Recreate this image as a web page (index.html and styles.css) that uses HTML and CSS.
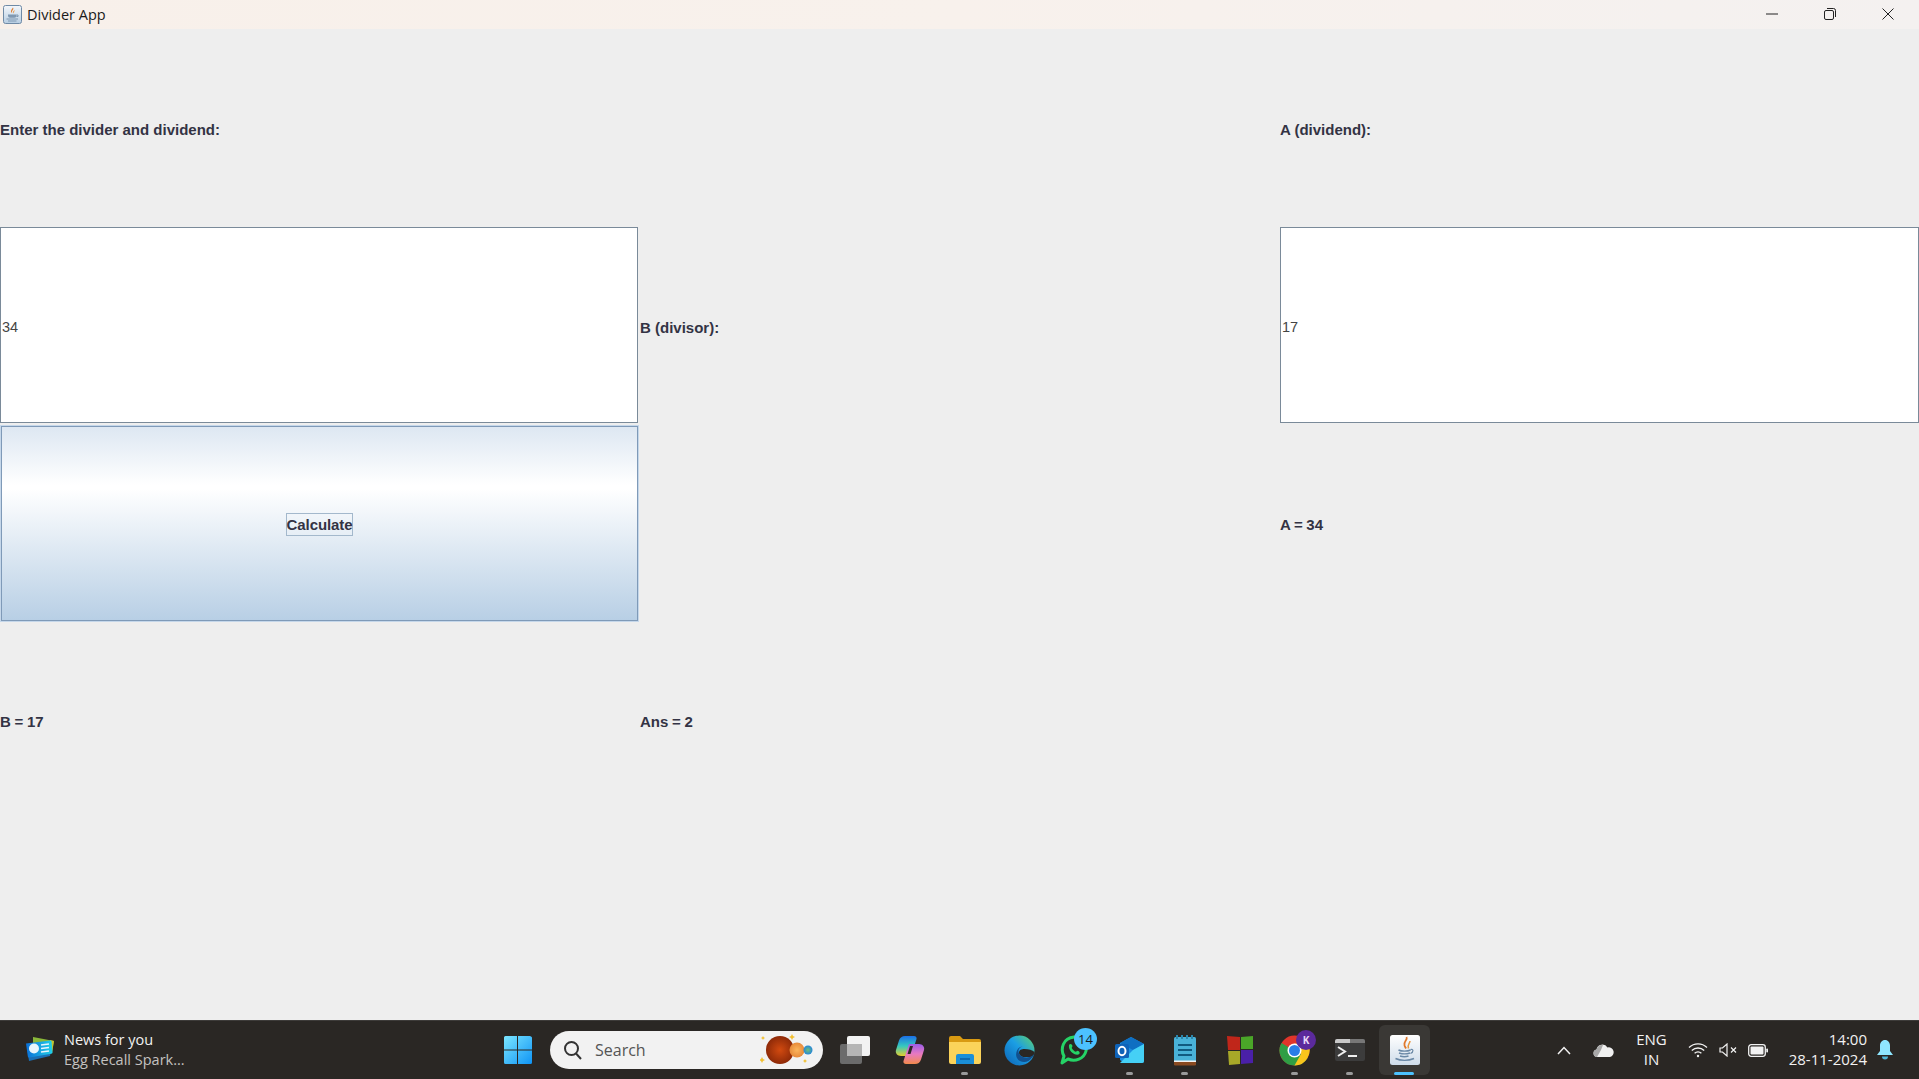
FILE: index.html
```html
<!DOCTYPE html>
<html lang="en">
<head>
<meta charset="UTF-8">
<title>Divider App</title>
<link rel="stylesheet" href="styles.css">
</head>
<body>

<header class="titlebar">
  <div class="app-title">
    <svg class="app-icon" width="21" height="21" viewBox="0 0 21 21">
      <defs>
        <linearGradient id="appbg" x1="0" y1="0" x2="0" y2="1">
          <stop offset="0" stop-color="#f4f7fb"/>
          <stop offset="1" stop-color="#b7cde2"/>
        </linearGradient>
      </defs>
      <rect x="1.500" y="1.500" width="18" height="18" rx="2" fill="url(#appbg)" stroke="#6f8aa6"/>
      <path d="M11 3.500c1.500 2-2 3-.8 5.500-2.400-1.500-.6-3.500.8-5.500z" fill="#e07a2c"/>
      <path d="M12.800 6c.2 1.500-1.800 2-1 3.500-1.800-1-.4-2.500 1-3.500z" fill="#e8963e"/>
      <path d="M6 10.500h8.500v1.200c0 1.300-1 2-2 2h-4.500c-1 0-2-.7-2-2z" fill="#7f98b2"/>
      <path d="M14.500 11h1.500v1.500h-1.500" fill="none" stroke="#7f98b2"/>
      <path d="M4.500 15h11.500M6 17h8.500" stroke="#7f98b2" stroke-width="1.100"/>
    </svg>
    <span>Divider App</span>
  </div>
  <div class="window-controls">
    <svg width="12" height="12" viewBox="0 0 12 12"><path d="M0 6h12" stroke="#222" stroke-width="1"/></svg>
    <svg width="12" height="12" viewBox="0 0 12 12" fill="none" stroke="#222"><rect x=".5" y="2.500" width="9" height="9" rx="1.500"/><path d="M3 .5h6.500a2 2 0 0 1 2 2V9"/></svg>
    <svg width="12" height="12" viewBox="0 0 12 12"><path d="M.5.5l11 11M11.500.5l-11 11" stroke="#222" stroke-width="1"/></svg>
  </div>
</header>

<main class="form-grid">
  <label class="cell">Enter the divider and dividend:</label>
  <div class="cell"></div>
  <label class="cell">A (dividend):</label>

  <div class="field">34</div>
  <label class="cell">B (divisor):</label>
  <div class="field">17</div>

  <div class="calc-button"><span class="calc-focus">Calculate</span></div>
  <div class="cell"></div>
  <div class="cell result">A = 34</div>

  <div class="cell result last-row">B = 17</div>
  <div class="cell result last-row">Ans = 2</div>
  <div class="cell"></div>
</main>

<footer class="taskbar">
  <div class="news">
    <svg width="32" height="32" viewBox="0 0 32 32">
      <defs>
        <linearGradient id="newsbg" x1="0" y1="0" x2="1" y2="0">
          <stop offset="0" stop-color="#0a6fd8"/>
          <stop offset="1" stop-color="#22d0e8"/>
        </linearGradient>
      </defs>
      <path d="M9 3l21 4-2 12-19-4z" fill="#8ab83a"/>
      <path d="M26 6l4 1-2 11-3-1z" fill="#c3c230"/>
      <path d="M3 13l24 4-1 5-21 5z" fill="#1a6fb5"/>
      <path d="M2 9.500l24-3c1-.1 1.500.5 1.600 1.300l.9 10.500c.1.800-.4 1.400-1.200 1.500l-22 3.700c-.8.100-1.400-.4-1.500-1.200z" fill="url(#newsbg)"/>
      <circle cx="10" cy="14.500" r="5" fill="#e8f6fc"/>
      <path d="M17 11l8-1M17 14.500l8-1M17 18l8-1" stroke="#e8f6fc" stroke-width="1.600"/>
    </svg>
    <div class="news-text">
      <div>News for you</div>
      <div class="news-sub">Egg Recall Spark...</div>
    </div>
  </div>

  <div class="task-center">
    <svg class="start" width="30" height="30" viewBox="0 0 30 30">
      <defs>
        <linearGradient id="win" x1="0" y1="0" x2="1" y2="1">
          <stop offset="0" stop-color="#7be6ff"/>
          <stop offset="1" stop-color="#0f94f5"/>
        </linearGradient>
      </defs>
      <path d="M1 2.500a1.500 1.500 0 0 1 1.500-1.500H14v13.500H1zM15 1h11.500A2.500 2.500 0 0 1 29 2.500V14.500H15zM1 15.500h13V29H2.500A1.500 1.500 0 0 1 1 27.500zM15 15.500h14V27.500a1.500 1.500 0 0 1-1.500 1.500H15z" fill="url(#win)"/>
    </svg>

    <div class="search">
      <svg width="20" height="21" viewBox="0 0 20 21" fill="none" stroke="#333" stroke-width="2"><circle cx="8.500" cy="8.500" r="6.500"/><path d="M13 13.500l5 5.500"/></svg>
      <span class="search-text">Search</span>
      <svg class="search-art" width="56" height="34" viewBox="0 0 56 34">
        <defs>
          <radialGradient id="mars"><stop offset="0" stop-color="#d24a10"/><stop offset="1" stop-color="#8e2a08"/></radialGradient>
          <radialGradient id="sun"><stop offset="0" stop-color="#fbb45c"/><stop offset="1" stop-color="#e88a3a"/></radialGradient>
          <radialGradient id="earth"><stop offset="0" stop-color="#6ec07a"/><stop offset="1" stop-color="#2486d8"/></radialGradient>
        </defs>
        <circle cx="20" cy="17" r="14" fill="url(#mars)"/>
        <circle cx="37" cy="17" r="7.500" fill="url(#sun)"/>
        <circle cx="48" cy="17" r="4.500" fill="url(#earth)"/>
        <path d="M2 24l1 2 2 1-2 1-1 2-1-2-2-1 2-1zM32 1l1 2 2 1-2 1-1 2-1-2-2-1 2-1zM3 3l.7 1.300 1.300.7-1.300.7L3 7l-.7-1.300L1 5l1.300-.7zM45 26l.7 1.300 1.300.7-1.300.7-.7 1.300-.7-1.300-1.300-.7 1.300-.7z" fill="#f2c030"/>
      </svg>
    </div>

    <div class="task-icon">
      <svg width="32" height="30" viewBox="0 0 32 30">
        <rect x="1" y="9" width="22" height="20" rx="2" fill="#6b6b6b"/>
        <rect x="8" y="1" width="23" height="20" rx="2" fill="#f2f2f2"/>
        <rect x="8" y="9" width="15" height="12" fill="#b5b5b5"/>
      </svg>
    </div>

    <div class="task-icon">
      <svg width="30" height="30" viewBox="0 0 30 30">
        <defs>
          <linearGradient id="cop1" x1="0" y1="0" x2="0" y2="1"><stop offset="0" stop-color="#1b6fe8"/><stop offset=".5" stop-color="#35c8c0"/><stop offset="1" stop-color="#e4d02e"/></linearGradient>
          <linearGradient id="cop2" x1="0" y1="0" x2="0" y2="1"><stop offset="0" stop-color="#9a5ce8"/><stop offset=".5" stop-color="#e87ac0"/><stop offset="1" stop-color="#f28a4c"/></linearGradient>
        </defs>
        <path d="M10 1h9c2 0 3 1.500 2.500 3L16 21H6c-3.500 0-6-3-5-6l3-9.500C5 2.500 7 1 10 1z" fill="url(#cop1)"/>
        <path d="M20 29h-9c-2 0-3-1.500-2.500-3L14 9h10c3.500 0 6 3 5 6l-3 9.500c-1 3-3 4.500-6 4.500z" fill="url(#cop2)"/>
        <path d="M15 11h3l-2.500 8h-3z" fill="#2a2724"/>
      </svg>
    </div>

    <div class="task-icon running">
      <svg width="34" height="30" viewBox="0 0 34 30">
        <path d="M1 3a2 2 0 0 1 2-2h9l3 3h16a2 2 0 0 1 2 2v3H1z" fill="#d99a12"/>
        <path d="M1 7h32v20a2 2 0 0 1-2 2H3a2 2 0 0 1-2-2z" fill="#fbd35a"/>
        <path d="M8 21a2 2 0 0 1 2-2h14a2 2 0 0 1 2 2v8H8z" fill="#1b8fd8"/>
        <path d="M12 23h10v2H12z" fill="#0f6ab0"/>
      </svg>
    </div>

    <div class="task-icon">
      <svg width="31" height="31" viewBox="0 0 31 31">
        <defs>
          <linearGradient id="edge1" x1="0" y1="1" x2="1" y2="0"><stop offset="0" stop-color="#0c62b4"/><stop offset=".55" stop-color="#1b9ee4"/><stop offset="1" stop-color="#62d46a"/></linearGradient>
        </defs>
        <circle cx="15.500" cy="15.500" r="15" fill="url(#edge1)"/>
        <path d="M30.500 17c0 3-2 5-5 5h-5c-3 0-5.500-2-5.500-4.500s2.500-3.500 5.500-3.500c4 0 8 1 10 3z" fill="#2a2724"/>
        <path d="M30.500 19c-1 2-2 3-2.500 3.800C25 27 20 28 16 26c-3.500-1.800-5-6-3-10.500 1-2.400 3.500-4 6-4-5 1-5 5-4 7 1.500 3 5 4.500 9 3.800 2-.3 4-1 6.500-3.300z" fill="#11508f"/>
      </svg>
    </div>

    <div class="task-icon">
      <svg width="31" height="32" viewBox="0 0 31 32" fill="none">
        <path d="M3 29l2-7C1 15 4 4 15 3c9-.5 14 7 12 14-2 8-11 11-18 8z" stroke="#25d366" stroke-width="3" stroke-linejoin="round"/>
        <path d="M10 11c1-2 3-1 3.500 1l-.8 2c1 2 2.500 3 4 3.800l1.800-1c2 .6 3 2 1.500 3.500-3.500 2-11-3-10-9.300z" fill="#25d366"/>
      </svg>
      <span class="badge-count">14</span>
    </div>

    <div class="task-icon running">
      <svg width="31" height="28" viewBox="0 0 31 28">
        <path d="M6 7l11-6 13 7v17a2 2 0 0 1-2 2H10l-4-3z" fill="#1a8fe0"/>
        <path d="M6 7l11-6 13 7-11 6z" fill="#0f6fc2"/>
        <path d="M30 8v17a2 2 0 0 1-2 2H6l13-13z" fill="#45d0f5"/>
        <rect x="1" y="8" width="14" height="14" rx="1.500" fill="#0f63b8"/>
        <ellipse cx="8" cy="15" rx="3.500" ry="4.200" fill="none" stroke="#fff" stroke-width="2"/>
      </svg>
    </div>

    <div class="task-icon running">
      <svg width="24" height="31" viewBox="0 0 24 31">
        <rect x="1" y="2" width="22" height="28" rx="1.500" fill="#49b2d8"/>
        <path d="M1 27h22v2.500a1 1 0 0 1-1 1H2a1 1 0 0 1-1-1z" fill="#8a4a20"/>
        <path d="M1 25.500h22v1.500H1z" fill="#f2f2f2"/>
        <path d="M5 10h14M5 15h14M5 20h14" stroke="#115a80" stroke-width="2"/>
        <path d="M4 0v4M9 0v4M14 0v4M19 0v4" stroke="#2a86ac" stroke-width="2"/>
      </svg>
    </div>

    <div class="task-icon">
      <svg width="28" height="30" viewBox="0 0 28 30">
        <path d="M1 1l13 1v13H2z" fill="#c0261a"/>
        <path d="M15 2l12-1v13H15z" fill="#4aa628"/>
        <path d="M2 16h12v13l-11 1z" fill="#a8a828"/>
        <path d="M15 15h12v13l-12 1z" fill="#4a20a8"/>
      </svg>
    </div>

    <div class="task-icon running">
      <svg width="31" height="31" viewBox="0 0 31 31">
        <circle cx="15.500" cy="15.500" r="15" fill="#e0352b"/>
        <path d="M15.500 15.500L28.500 23a15 15 0 0 1-13 7.500 15 15 0 0 1-13-7.500z" fill="#2f9e44"/>
        <path d="M15.500 8.500H29a15 15 0 0 1-.5 14.500 15 15 0 0 1-13 7.500L22 19z" fill="#f8c41c"/>
        <path d="M2.500 8a15 15 0 0 0 0 15l7 -2L15 15.500z" fill="#2f9e44"/>
        <circle cx="15.500" cy="15.500" r="7" fill="#fff"/>
        <circle cx="15.500" cy="15.500" r="5.500" fill="#2a7de8"/>
      </svg>
      <span class="badge-profile">K</span>
    </div>

    <div class="task-icon running">
      <svg width="30" height="23" viewBox="0 0 30 23">
        <rect width="30" height="22" rx="2" fill="#3c3c3c"/>
        <path d="M0 2a2 2 0 0 1 2-2h13v4H0z" fill="#c8c8c8"/>
        <path d="M15 0h13a2 2 0 0 1 2 2v2H15z" fill="#777"/>
        <path d="M3 8l7 4.500-7 4.500" fill="none" stroke="#f0f0f0" stroke-width="2"/>
        <path d="M13 17h9" stroke="#f0f0f0" stroke-width="2"/>
      </svg>
    </div>

    <div class="task-icon active">
      <svg width="30" height="30" viewBox="0 0 30 30">
        <defs>
          <linearGradient id="javabg" x1="0" y1="0" x2="0" y2="1"><stop offset="0" stop-color="#fff"/><stop offset="1" stop-color="#cfdcea"/></linearGradient>
        </defs>
        <rect width="30" height="30" rx="2.500" fill="url(#javabg)"/>
        <g fill="none">
          <path d="M16.500 2c1.500 3-3.500 4.500-2 8.500.4 1 1 2 1.500 3" stroke="#e0782c" stroke-width="1.800"/>
          <path d="M20 6c0 2.500-3 3.500-1.500 7.500" stroke="#e8963e" stroke-width="1.500"/>
          <path d="M8.500 15c3 1.500 9 1.500 12 0M9 18c3 1 8 1 11 0M10 21c2.500.8 6 .8 8.500 0" stroke="#6a88a6" stroke-width="1.400"/>
          <path d="M20.500 14.500c3-1 3.500 2.500 0 4" stroke="#6a88a6" stroke-width="1.200"/>
          <path d="M5.500 23.500c5 2.500 13 2.500 18.500 0" stroke="#6a88a6" stroke-width="1.400"/>
        </g>
      </svg>
    </div>
  </div>

  <div class="tray">
    <svg width="14" height="9" viewBox="0 0 14 9" fill="none" stroke="#f2f2f2" stroke-width="1.500"><path d="M1 8l6-6.500L13 8"/></svg>
    <svg class="tray-cloud" width="21" height="14" viewBox="0 0 21 14"><path d="M4 14a3.800 3.800 0 0 1-.5-7.500A6 6 0 0 1 14.500 4.500 4.700 4.700 0 0 1 17 14z" fill="#f0f0f0"/><path d="M4 14a3.800 3.800 0 0 1-.5-7.500A6 6 0 0 1 10 2L8 7z" fill="#a8a8a8"/></svg>
    <div class="tray-lang"><div>ENG</div><div>IN</div></div>
    <div class="tray-status">
      <svg width="20" height="16" viewBox="0 0 20 16" fill="none" stroke="#f2f2f2" stroke-width="1.300"><path d="M1 5.500a13 13 0 0 1 18 0M3.800 8.500a9 9 0 0 1 12.400 0M6.600 11.300a5 5 0 0 1 6.800 0"/><circle cx="10" cy="14" r="1.200" fill="#f2f2f2" stroke="none"/></svg>
      <svg class="tray-mute" width="19" height="14" viewBox="0 0 19 14" fill="none" stroke="#f2f2f2" stroke-width="1.200"><path d="M1 5v4h2.500L8 13V1L3.500 5z"/><path d="M12 4.500l5 5M17 4.500l-5 5"/></svg>
      <svg width="20" height="13" viewBox="0 0 20 13" fill="none"><rect x=".7" y=".7" width="16.600" height="11.600" rx="2.500" stroke="#f2f2f2" stroke-width="1.300"/><rect x="2.500" y="2.500" width="13" height="8" rx="1" fill="#f2f2f2"/><rect x="18.300" y="4.500" width="1.700" height="4" rx=".8" fill="#f2f2f2"/></svg>
    </div>
    <div class="tray-clock"><div>14:00</div><div>28-11-2024</div></div>
    <svg width="16" height="20" viewBox="0 0 16 20"><path d="M8 0c3 0 5 2.500 5 5.500V11l3 4H0l3-4V5.500C3 2.500 5 0 8 0z" fill="#8fe6ff"/><path d="M5 16.500h6a3 3 0 0 1-6 0z" fill="#4fb6d8"/></svg>
  </div>
</footer>

</body>
</html>
```

FILE: styles.css
```css
* {
  box-sizing: border-box;
}

body {
  margin: 0;
  height: 100vh;
  overflow: hidden;
  display: flex;
  flex-direction: column;
  background-color: #eeeeee;
  font-family: "Liberation Sans", Arial, sans-serif;
}

.titlebar {
  height: 29px;
  flex: none;
  display: flex;
  justify-content: space-between;
  align-items: center;
  background: linear-gradient(to right, #f8f0ea, #f8f1ec 50%, #f4f1f0);
}

.app-title {
  display: flex;
  align-items: center;
  gap: 4px;
  padding-left: 2px;
  font-family: "Open Sans", sans-serif;
  font-size: 14.5px;
  color: #1a1a1a;
}

.window-controls {
  display: flex;
  gap: 46px;
  padding: 0 25px 2px 0;
}

.form-grid {
  flex: 1;
  display: grid;
  grid-template-columns: 638px 638px 639px;
  grid-template-rows: repeat(4, 196px);
  gap: 2px;
  align-content: start;
  font-size: 15px;
  font-weight: bold;
  color: #333344;
}

.cell {
  display: flex;
  align-items: center;
  padding-top: 4px;
}

.result {
  padding-top: 2px;
  word-spacing: -.5px;
}

.last-row {
  padding-top: 0;
}

.field {
  display: flex;
  align-items: center;
  padding: 4px 0 0 1px;
  background-color: #fff;
  border: 1px solid #7a8a99;
  font-size: 14.5px;
  font-weight: normal;
  color: #444;
}

.calc-button {
  display: flex;
  justify-content: center;
  align-items: center;
  margin: 1px 0 0 1px;
  padding-top: 1px;
  background: linear-gradient(to bottom, #dde7f2, #ffffff 30%, #ffffff 32%, #b8cfe5);
  border: 1px solid #7f9ab8;
  box-shadow: 0 0 0 1px #c5d7ea;
}

.calc-focus {
  padding: 2px 0;
  border: 1px solid #a3b8cc;
  letter-spacing: -.1px;
}

.taskbar {
  height: 59px;
  flex: none;
  display: flex;
  align-items: center;
  background-color: #2a2724;
  border-top: 1px solid #3d3b39;
  font-family: "Open Sans", sans-serif;
  color: #f2f2f2;
}

.news {
  width: 490px;
  flex: none;
  display: flex;
  align-items: center;
  gap: 8px;
  padding-left: 24px;
  font-size: 14.5px;
  line-height: 20px;
}

.news-sub {
  color: #c4c2c0;
}

.task-center {
  display: flex;
  align-items: center;
}

.start {
  margin: 0 17px 0 13px;
}

.search {
  width: 273px;
  height: 38px;
  margin-right: 4px;
  display: flex;
  align-items: center;
  gap: 12px;
  position: relative;
  padding-left: 13px;
  background-color: #f2f2f2;
  border-radius: 19px;
  color: #555;
  font-size: 16px;
}

.search-art {
  position: absolute;
  right: 7px;
  top: 2px;
}

.task-icon {
  width: 55px;
  height: 50px;
  flex: none;
  display: flex;
  justify-content: center;
  align-items: center;
  position: relative;
}

.running::after,
.active::after {
  content: "";
  position: absolute;
  bottom: 0;
  left: 24px;
  width: 7px;
  height: 3px;
  border-radius: 2px;
  background-color: #9a9a9a;
}

.active {
  width: 51px;
  margin: 0 2px;
  background-color: #3a3835;
  border-radius: 6px;
}

.active::after {
  left: 15px;
  width: 20px;
  background-color: #4cc2ff;
}

.badge-count {
  position: absolute;
  top: 3px;
  right: 5px;
  width: 23px;
  height: 22px;
  border-radius: 50%;
  background-color: #4cc2ff;
  color: #1a1a1a;
  font-size: 13px;
  line-height: 22px;
  text-align: center;
}

.badge-profile {
  position: absolute;
  top: 5px;
  right: 6px;
  width: 20px;
  height: 20px;
  border-radius: 50%;
  background-color: #5b2a9c;
  color: #e8d8f8;
  font-size: 10px;
  font-weight: bold;
  line-height: 20px;
  text-align: center;
}

.tray {
  margin-left: auto;
  display: flex;
  align-items: center;
  padding-right: 26px;
  font-size: 15px;
  line-height: 20px;
}

.tray-cloud {
  margin-left: 22px;
}

.tray-lang {
  margin: -2px 0 0 22px;
  text-align: center;
}

.tray-status {
  display: flex;
  align-items: center;
  gap: 11px;
  margin-left: 21px;
}

.tray-mute {
  margin-right: -1px;
}

.tray-clock {
  margin: -2px 10px 0 21px;
  text-align: right;
}
```
